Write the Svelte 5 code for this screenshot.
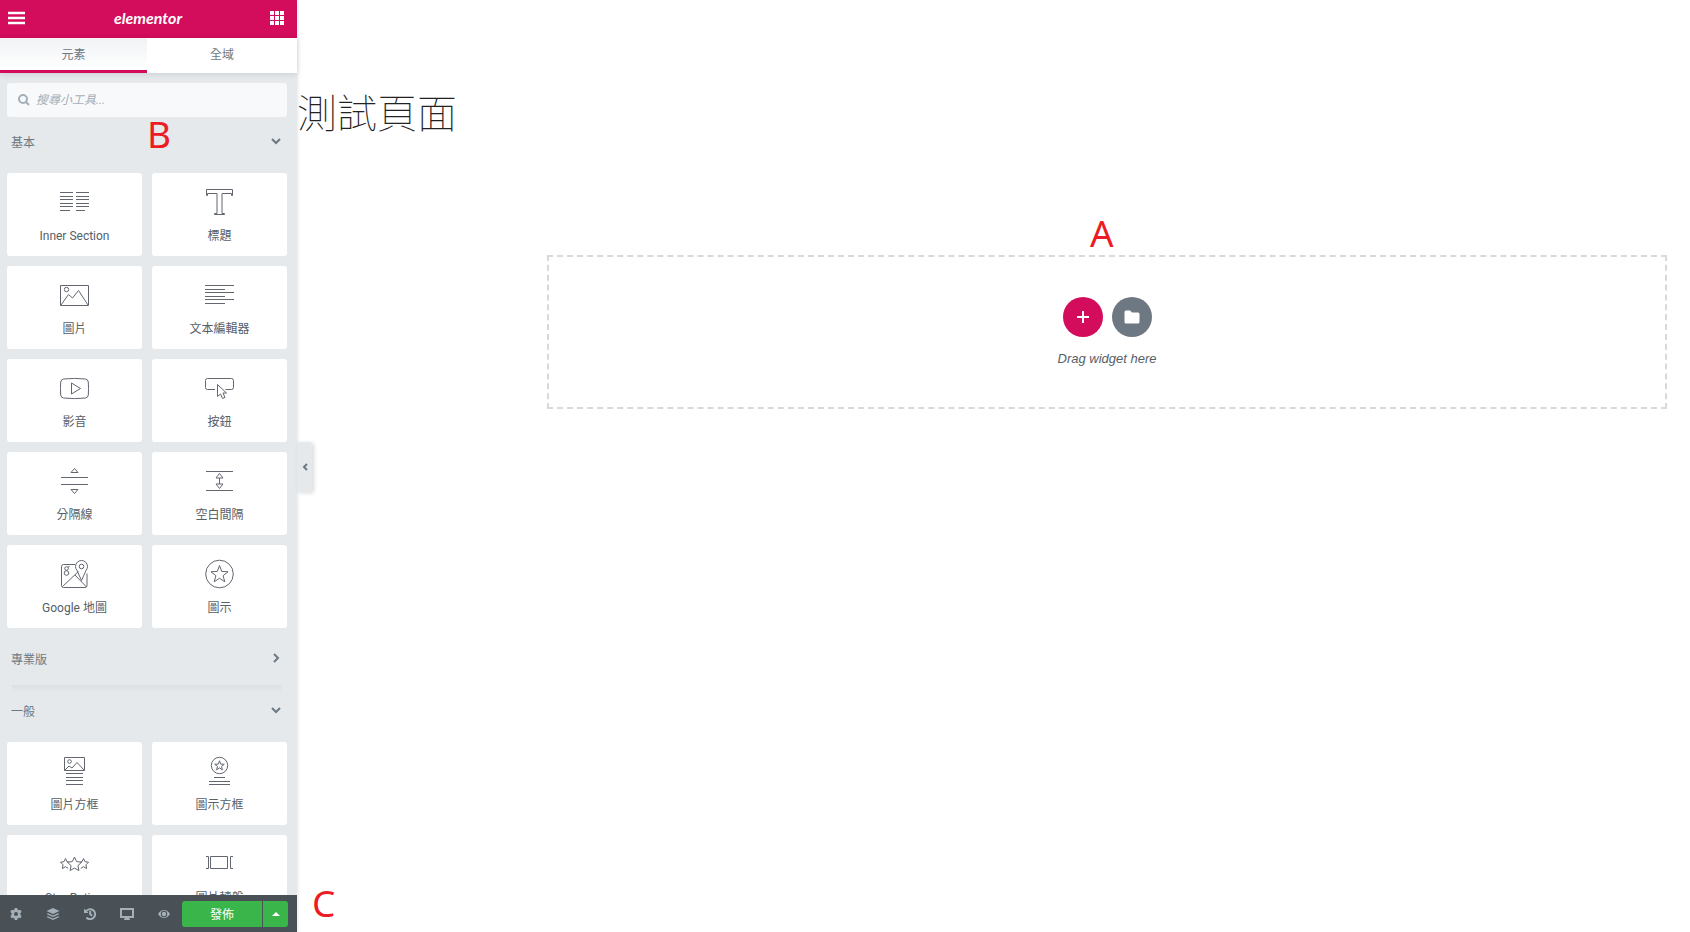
<script>
  let search = '';
  let tab = 'elements';

  const star = (cx, cy, r, inner = 0.42) => {
    const pts = [];
    for (let i = 0; i < 10; i++) {
      const a = Math.PI * (i / 5 - 0.5);
      const d = i % 2 ? r * inner : r;
      pts.push(`${(cx + d * Math.cos(a)).toFixed(2)} ${(cy + d * Math.sin(a)).toFixed(2)}`);
    }
    return `M${pts.join('L')}z`;
  };

  const circle = (cx, cy, r) => `M${cx - r} ${cy}a${r} ${r} 0 1 0 ${2 * r} 0a${r} ${r} 0 1 0 ${-2 * r} 0z`;

  const basic = [
    {
      title: 'Inner Section',
      icon: 'M0 4.5h13M0 8.5h13M0 11.5h13M0 15.5h13M0 18.5h13M0 22.5h10M16 4.5h13M16 8.5h13M16 11.5h13M16 15.5h13M16 18.5h13M16 22.5h9'
    },
    { title: '標題', icon: 'M1.5 1.5h26v6h-1v-2h-9.500v20h2.500v1h-10v-1h2.500v-20h-9.500v2h-1z' },
    { title: '圖片', icon: `M.5 4.5h28v20h-28zM1 24L8.5 13.5 12.5 17 18.5 9.5 28 24${circle(6.5, 8.5, 2.2)}` },
    { title: '文本編輯器', icon: 'M0 4.5h29M0 8.5h20M0 11.5h29M0 15.5h20M0 18.5h29M0 22.5h20' },
    { title: '影音', icon: 'M3.5 5Q14.500 3.8 25.5 5Q28 5.3 28.3 8Q28.8 14.5 28.3 21Q28 23.7 25.5 24Q14.500 25.2 3.5 24Q1 23.7 .7 21Q.2 14.5 .7 8Q1 5.3 3.5 5zM11.5 9v11l9-5.5z' },
    { title: '按鈕', icon: 'M10 15.5h-7.5q-2 0-2-2v-7q0-2 2-2h24q2 0 2 2v7q0 2-2 2h-6M12.5 10.5v12l3-2.5 2 4.5 2.5-1-2-4.500h3.500z' },
    { title: '分隔線', icon: 'M1 10.5h27M1 17.5h27M14.5 1.5l3.5 4h-7zM14.5 26.5l3.5-4h-7z' },
    { title: '空白間隔', icon: 'M1 4.5h27M1 23.5h27M14.5 6.5l3.5 4.5h-7zM14.5 21.5l3.5-4.5h-7zM14.5 11v6' },
    {
      title: 'Google 地圖',
      icon: `M15 4.5h-11.5q-2 0-2 2v19q0 2 2 2h21.5q2 0 2-2v-12M2.5 26.5L18.5 11.5M15 15L26.5 27M21.5 20.5L17 10.5Q15.5 8.5 15.5 6.5a6 6 0 0 1 12 0Q27.5 8.5 26 10.5z${circle(21.5, 6.5, 2.3)}${circle(6.5, 8.5, 1.8)}${circle(6.5, 13, 2.3)}M8 7l1.5-.5`
    },
    { title: '圖示', icon: circle(14.5, 14, 13.8) + star(14.5, 14.5, 9) }
  ];

  const general = [
    {
      title: '圖片方框',
      icon: `M4.5 .5h20v13h-20zM5 13l4-4 3 2 5-5.5 7 7.5${circle(9.5, 4.5, 1.8)}M6 16.5h17M6 20.5h17M6 23.5h17M6 27.5h17`
    },
    { title: '圖示方框', icon: `${circle(14.5, 8.5, 8.2)}${star(14.5, 8.8, 5)}M9 20.5h11M4 24.5h21M4 27.5h21` },
    {
      title: 'Star Rating',
      icon: star(14.5, 14.5, 7.5, 0.48) + 'M8.5 12l-1.500-.3-1.500-3.200-1.500 3.200-3.500.5 2.500 2.500-.6 3.800 3.100-1.800 2.700 1.600M20.5 12l1.500-.3 1.500-3.200 1.500 3.200 3.500.5-2.500 2.500.6 3.800-3.100-1.800-2.700 1.600'
    },
    { title: '圖片轉盤', icon: 'M5.5 6.5h17v12h-17zM1 6.5h2.5v12h-2.5M28 6.5h-2.500v12h2.500' }
  ];
</script>

{#snippet widgets(items)}
  <div class="widgets">
    {#each items as item}
      <button class="widget">
        <svg viewBox="0 0 29 29"><path d={item.icon} /></svg>
        <span>{item.title}</span>
      </button>
    {/each}
  </div>
{/snippet}

<div class="editor">
  <aside class="panel">
    <header>
      <button aria-label="Menu">
        <svg width="18" height="14" viewBox="0 0 18 14"><path d="M0 2h17M0 7h17M0 12h17" stroke="#fff" stroke-width="2.4" /></svg>
      </button>
      <span class="logo">elementor</span>
      <button aria-label="Widgets">
        <svg width="14" height="14" viewBox="0 0 14 14" fill="#fff">
          {#each [0, 5, 10] as y}
            {#each [0, 5, 10] as x}
              <rect {x} {y} width="4" height="4" />
            {/each}
          {/each}
        </svg>
      </button>
    </header>

    <nav class="tabs">
      <button class:active={tab === 'elements'} on:click={() => (tab = 'elements')}>元素</button>
      <button class:active={tab === 'global'} on:click={() => (tab = 'global')}>全域</button>
    </nav>

    <div class="content">
      <label class="search">
        <svg width="12" height="12" viewBox="0 0 12 12"><path d="M9 5a4 4 0 1 1-8 0a4 4 0 0 1 8 0zM8 8l3 3" /></svg>
        <input type="text" placeholder="搜尋小工具..." aria-label="搜尋小工具" bind:value={search} />
      </label>

      <button class="category">
        基本
        <svg width="10" height="10" viewBox="0 0 10 10"><path d="M1 3l4 4 4-4" /></svg>
      </button>
      {@render widgets(basic)}

      <button class="category">
        專業版
        <svg width="10" height="10" viewBox="0 0 10 10"><path d="M3 1l4 4-4 4" /></svg>
      </button>
      <div class="divider"></div>
      <button class="category">
        一般
        <svg width="10" height="10" viewBox="0 0 10 10"><path d="M1 3l4 4 4-4" /></svg>
      </button>
      {@render widgets(general)}
    </div>

    <footer>
      <div class="tools">
        <button aria-label="Settings">
          <svg width="12" height="12" viewBox="0 0 12 12">
            <path fill-rule="evenodd" d="M4.8 0h2.400l.4 1.600 1.200.7 1.600-.5 1.200 2.100-1.200 1.200v1.800l1.200 1.200-1.200 2.100-1.600-.5-1.200.7-.4 1.600h-2.400l-.4-1.600-1.200-.7-1.600.5-1.200-2.100 1.200-1.200v-1.800l-1.200-1.200 1.200-2.100 1.600.5 1.200-.7zM6 4a2 2 0 1 0 0 4a2 2 0 1 0 0-4z" />
          </svg>
        </button>
        <button aria-label="Navigator">
          <svg width="14" height="12" viewBox="0 0 14 12">
            <path d="M7 0l6.5 3-6.5 3-6.5-3zM2 5.2l5 2.300 5-2.300 1.500.8-6.500 3-6.500-3zM2 8.2l5 2.300 5-2.300 1.500.8-6.500 3-6.500-3z" />
          </svg>
        </button>
        <button aria-label="History">
          <svg width="12" height="12" viewBox="0 0 12 12">
            <path class="line" d="M1.6 4a5 5 0 1 1 .8 5.5M6.2 3v3.3l2 1.3" />
            <path d="M0 .5l4.5 4.5h-4.5z" />
          </svg>
        </button>
        <button aria-label="Responsive Mode">
          <svg width="14" height="12" viewBox="0 0 14 12">
            <path class="line" d="M1 1h12v8h-12z" />
            <path d="M5 9h4l.5 2h.5v1h-6v-1h.5z" />
          </svg>
        </button>
        <button aria-label="Preview">
          <svg width="12" height="12" viewBox="0 0 12 12">
            <path fill-rule="evenodd" d="M0 6q2.5-4 6-4t6 4q-2.500 4-6 4t-6-4zM6 2.800a3.200 3.200 0 1 0 0 6.400a3.200 3.200 0 1 0 0-6.400z" />
            <circle cx="6" cy="6" r="2.2" />
          </svg>
        </button>
      </div>
      <button class="publish">發佈</button>
      <button class="options" aria-label="Save Options">
        <svg width="8" height="4" viewBox="0 0 8 4" fill="#fff"><path d="M4 0l4 4h-8z" /></svg>
      </button>
    </footer>

    <button class="collapse" aria-label="Hide Panel">
      <svg width="6" height="8" viewBox="0 0 6 8"><path d="M5 1l-3 3 3 3" /></svg>
    </button>
    <span class="mark mark-b">B</span>
    <span class="mark mark-c">C</span>
  </aside>

  <main>
    <h1>測試頁面</h1>
    <section class="drop">
      <span class="mark mark-a">A</span>
      <div class="actions">
        <button class="add" aria-label="Add New Section">
          <svg width="14" height="14" viewBox="0 0 14 14"><path d="M7 1v12M1 7h12" stroke="#fff" stroke-width="2" /></svg>
        </button>
        <button class="template" aria-label="Add Template">
          <svg width="16" height="14" viewBox="0 0 16 14" fill="#fff">
            <path d="M2 .5h4l2 2h6q1.500 0 1.500 1.500v8q0 1.500-1.500 1.500h-12q-1.500 0-1.500-1.500v-10q0-1.500 1.500-1.500z" />
          </svg>
        </button>
      </div>
      <p>Drag widget here</p>
    </section>
  </main>
</div>

<style>
  :global(body) {
    margin: 0;
    background: #fff;
  }

  .editor {
    display: flex;
    height: 100vh;
    overflow: hidden;
    font-family: Roboto, 'Noto Sans CJK TC', sans-serif;
    font-size: 12px;
    color: #556068;
  }

  button {
    margin: 0;
    padding: 0;
    border: 0;
    background: none;
    font: inherit;
    color: inherit;
    cursor: pointer;
  }

  svg {
    display: block;
    flex: none;
  }

  .panel {
    position: relative;
    z-index: 1;
    display: flex;
    flex-direction: column;
    flex: none;
    width: 297px;
    background: #e6e9ec;
    box-shadow: 0 0 4px rgba(0, 0, 0, 0.15);
  }

  header {
    display: flex;
    align-items: center;
    justify-content: space-between;
    flex: none;
    height: 38px;
    padding: 0 13px 2px 8px;
    box-sizing: border-box;
    background: #d30c5c;
  }

  .logo {
    font-family: Lato, sans-serif;
    font-size: 16px;
    font-weight: bold;
    font-style: italic;
    line-height: 20px;
    color: #fff;
  }

  .tabs {
    position: relative;
    display: grid;
    grid-template-columns: 147px 1fr;
    flex: none;
    height: 35px;
    background: #fff;
    box-shadow: 0 1px 6px rgba(0, 0, 0, 0.12);
    color: #6d7882;
  }

  .tabs button {
    padding-bottom: 2px;
    border-bottom: 3px solid transparent;
  }

  .tabs .active {
    border-bottom-color: #d30c5c;
    background: linear-gradient(#f1f3f5, #fff);
  }

  .content {
    flex: 1;
    min-height: 0;
    padding: 10px 10px 0 7px;
    overflow: hidden;
  }

  .search {
    display: flex;
    align-items: center;
    gap: 6px;
    height: 34px;
    padding: 0 11px;
    border-radius: 3px;
    background: #f8f9fa;
  }

  .search path {
    fill: none;
    stroke: #a4afb7;
    stroke-width: 2px;
  }

  .search input {
    flex: 1;
    min-width: 0;
    padding: 0;
    border: 0;
    outline: 0;
    background: none;
    font: inherit;
    font-style: italic;
    color: #6d7882;
  }

  .search input::placeholder {
    color: #a4afb7;
  }

  .category {
    display: flex;
    align-items: center;
    justify-content: space-between;
    width: 100%;
    height: 50px;
    padding: 0 6px 2px 4px;
    color: #6d7882;
  }

  .category path,
  .collapse path {
    fill: none;
    stroke: #6d7882;
    stroke-width: 2px;
  }

  .divider {
    height: 7px;
    margin: 1px 5px -6px;
    background: linear-gradient(#dcdfe3, #e6e9ec);
  }

  .widgets {
    display: grid;
    grid-template-columns: 1fr 1fr;
    gap: 10px;
    padding: 6px 0;
  }

  .widget {
    display: flex;
    flex-direction: column;
    align-items: center;
    gap: 10px;
    height: 83px;
    padding-top: 15px;
    border-radius: 3px;
    background: #fff;
    line-height: 18px;
  }

  .widget svg {
    width: 29px;
    height: 29px;
    overflow: visible;
  }

  .widget path {
    fill: none;
    stroke: #62666f;
    stroke-width: 1px;
  }

  footer {
    display: flex;
    align-items: center;
    flex: none;
    height: 37px;
    padding-right: 9px;
    background: #495157;
  }

  .tools {
    display: flex;
    gap: 6px;
    padding-right: 3px;
    fill: #a4afb7;
  }

  .tools button {
    display: flex;
    justify-content: center;
    width: 31px;
  }

  .tools .line {
    fill: none;
    stroke: #a4afb7;
    stroke-width: 2px;
  }

  .publish,
  .options {
    height: 26px;
    background: #39b54a;
    color: #fff;
  }

  .publish {
    flex: 1;
    border-radius: 3px 0 0 3px;
  }

  .options {
    display: flex;
    align-items: center;
    justify-content: center;
    width: 25px;
    margin-left: 1px;
    border-radius: 0 3px 3px 0;
  }

  .collapse {
    position: absolute;
    top: 442px;
    left: 100%;
    display: flex;
    align-items: center;
    justify-content: center;
    width: 15px;
    height: 50px;
    border-radius: 0 3px 3px 0;
    background: #e6e9ec;
    box-shadow: 2px 1px 4px rgba(0, 0, 0, 0.15);
  }

  main {
    flex: 1;
    min-width: 0;
    padding: 85px 23px 0 0;
  }

  h1 {
    margin: 0;
    font-size: 40px;
    font-weight: 100;
    line-height: 60px;
    color: #222;
  }

  .drop {
    position: relative;
    display: flex;
    flex-direction: column;
    align-items: center;
    margin: 110px 0 0 250px;
    padding: 40px 0 38px;
    border: 2px dashed #d5dadf;
  }

  .actions {
    display: flex;
    gap: 9px;
  }

  .actions button {
    display: flex;
    align-items: center;
    justify-content: center;
    width: 40px;
    height: 40px;
    border-radius: 50%;
  }

  .add {
    background: #d30c5c;
  }

  .template {
    background: #6d7882;
  }

  .drop p {
    margin: 12px 0 0;
    font-family: 'Liberation Sans', sans-serif;
    font-size: 13px;
    font-style: italic;
    line-height: 20px;
  }

  .mark {
    position: absolute;
    font-family: 'Noto Sans', sans-serif;
    font-size: 37px;
    line-height: 40px;
    color: #ed1c24;
  }

  .mark-a {
    bottom: 100%;
    left: 541px;
    padding-bottom: 4px;
  }

  .mark-b {
    top: 114px;
    left: 147px;
  }

  .mark-c {
    bottom: 9px;
    left: 312px;
  }
</style>
